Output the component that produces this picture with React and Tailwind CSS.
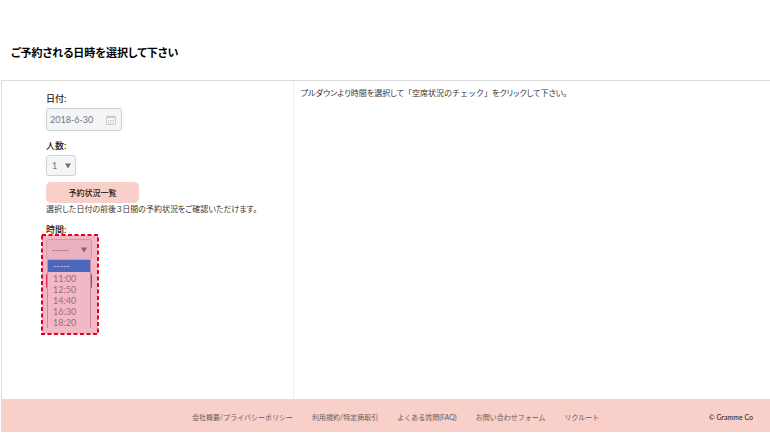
import React, { useState } from "react";

const TIMES = ["11:00", "12:50", "14:40", "16:30", "18:20"];

const LINKS = [
  "会社概要/プライバシーポリシー",
  "利用規約/特定商取引",
  "よくある質問(FAQ)",
  "お問い合わせフォーム",
  "リクルート",
];

function CalendarIcon() {
  return (
    <svg viewBox="0 0 10 10" className="h-[10px] w-[10px] shrink-0" fill="none" stroke="#c9cbcd" aria-hidden="true">
      <path d="M0.5 1.5h9v8h-9z" />
      <path d="M1 2.5h8M2.5 0v2M7.5 0v2" />
      <path d="M2 5.5h6M2 7.5h6" strokeDasharray="1.5 0.75" />
    </svg>
  );
}

function Arrow() {
  return (
    <svg viewBox="0 0 6 6" className="pointer-events-none absolute top-1/2 right-[5px] h-[6px] w-[6px] -translate-y-1/2" aria-hidden="true">
      <path d="M0 0.5h6L3 5.5z" fill="#6d7276" />
    </svg>
  );
}

const label = "block text-[9px] leading-[12px] font-medium text-[#1c1614]";
const box = "rounded-[3px] border border-[#cdd2d5] bg-[#f3f5f7] text-[9px] text-[#73777b]";

export default function App() {
  const [date, setDate] = useState("2018-6-30");
  return (
    <div
      lang="ja"
      className="flex min-h-screen flex-col bg-white pb-px pl-px font-[Lato,'Noto_Sans_CJK_JP',sans-serif] [font-feature-settings:'palt']"
    >
      <header className="px-[10px] pt-[45px] pb-[19px]">
        <h1 className="text-[11px] leading-[16px] font-bold text-black">ご予約される日時を選択して下さい</h1>
      </header>

      <main className="flex grow border-t border-l border-[#dcdcdc]">
        <form className="w-[38%] shrink-0 border-r border-[#f0f0f0] pt-[12px] pl-[44px]" onSubmit={(e) => e.preventDefault()}>
          <label htmlFor="date" className={label}>日付:</label>
          <div className={`mt-[3px] flex h-[23px] w-[76px] items-center pr-[5px] pl-[3px] ${box}`}>
            <input
              id="date"
              type="text"
              value={date}
              onChange={(e) => setDate(e.target.value)}
              className="w-full min-w-0 bg-transparent outline-none"
            />
            <CalendarIcon />
          </div>

          <label htmlFor="people" className={`mt-[9px] ${label}`}>人数:</label>
          <div className="relative mt-[3px] w-[30px]">
            <select id="people" defaultValue="1" className={`block h-[21px] w-full appearance-none pl-[5px] ${box}`}>
              <option>1</option>
              <option>2</option>
              <option>3</option>
              <option>4</option>
            </select>
            <Arrow />
          </div>

          <button type="button" className="mt-[6px] block h-[21px] w-[93px] rounded-[5px] bg-[#f8cfc9] text-[8px] font-medium text-[#241a18]">
            予約状況一覧
          </button>
          <p className="text-[8px] leading-[12px] whitespace-nowrap text-[#3a3330]">
            選択した日付の前後３日間の予約状況をご確認いただけます。
          </p>

          <label htmlFor="time" className={`mt-[9px] ${label}`}>時間:</label>
          <div className="relative mt-[3px] w-[46px]">
            <div className="relative">
              <select id="time" defaultValue="" className={`block h-[21px] w-full appearance-none pl-[5px] ${box}`}>
                <option value="">-----</option>
                {TIMES.map((t) => (
                  <option key={t}>{t}</option>
                ))}
              </select>
              <Arrow />
            </div>
            <button type="button" aria-label="空席状況のチェック" className="mt-[13px] block h-[16px] w-full rounded-[3px] bg-[#c8324b]" />
            <ul
              role="listbox"
              aria-label="時間"
              className="absolute top-[21px] left-px w-[44px] border-x border-[#b9bcc4] bg-white text-[9px] leading-[11px] text-[#85898d]"
            >
              <li role="option" aria-selected="true" className="mb-px h-[12px] bg-[#0088f5] pl-[5px] text-white">-----</li>
              {TIMES.map((t) => (
                <li role="option" aria-selected="false" key={t} className="pl-[5px]">{t}</li>
              ))}
            </ul>
            <svg
              className="pointer-events-none absolute -top-[5px] -left-[5px] h-[101px] w-[58px]"
              viewBox="0 0 58 101"
              aria-hidden="true"
            >
              <rect x="1" y="1" width="56" height="99" fill="#d83054" fillOpacity="0.34" />
              <rect x="1" y="1" width="56" height="99" fill="none" stroke="#e60020" strokeWidth="2" strokeDasharray="4 2.5" />
            </svg>
          </div>
        </form>

        <section className="min-w-0 grow pt-[6px] pl-[7px]">
          <p className="text-[8px] leading-[12px] text-[#3a3330]">
            プルダウンより時間を選択して
            <span className="[font-feature-settings:normal]">「空席状況のチェック」</span>
            をクリックして下さい。
          </p>
        </section>
      </main>

      <footer className="flex h-[33px] items-center justify-end border-t border-[#e4dcda] bg-[#f8cfc9] pt-[2px] pr-[17px] pl-[4px] text-[7px] leading-[12px] [font-feature-settings:normal]">
        <nav className="mr-auto flex gap-[19px] pl-[25%] whitespace-nowrap text-[#6b5a57]">
          {LINKS.map((t) => (
            <a key={t} href="#">{t}</a>
          ))}
        </nav>
        <small className="text-[7px] whitespace-nowrap text-[#241a18]">© Gramme Co</small>
      </footer>
    </div>
  );
}
